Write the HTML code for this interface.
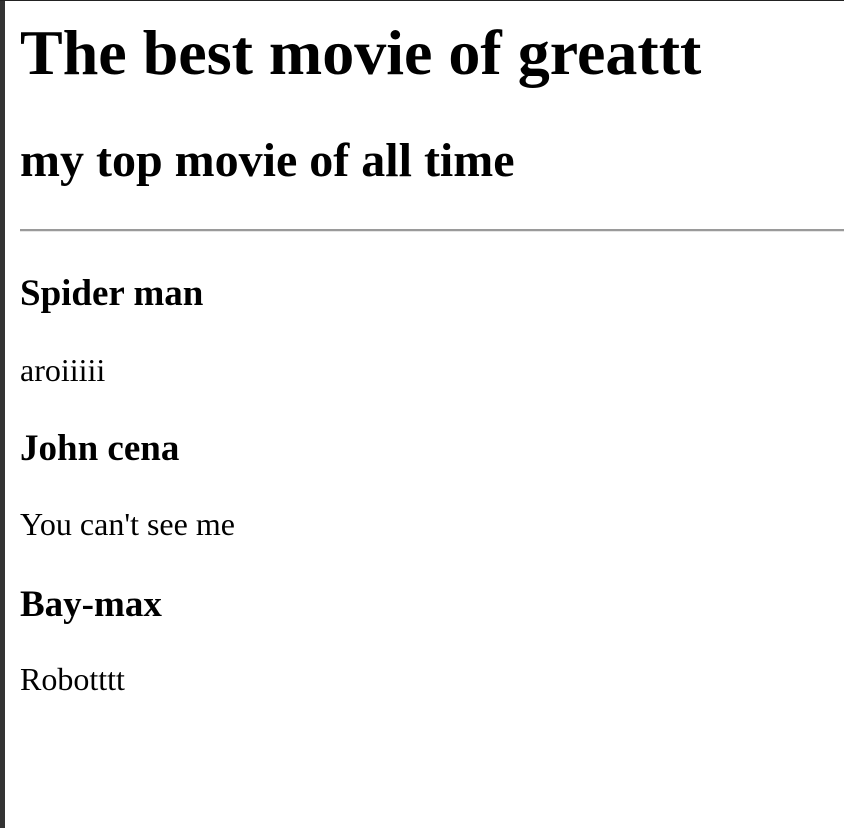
<!DOCTYPE html>
<html><head><style>
html,body{margin:0;padding:0;width:844px;height:828px;overflow:hidden;background:#fff;position:relative;font-family:"Liberation Serif",serif;color:#000}
.l{position:absolute;left:0;top:0;width:5px;height:828px;background:#333}
.t{position:absolute;left:0;top:0;width:844px;height:1px;background:#222}
.x{position:absolute;left:20px;margin:0;line-height:1;white-space:nowrap;font-weight:bold}
.p{font-weight:normal;font-size:32px}
.h3{font-size:37px}
hr{position:absolute;left:20px;top:229px;width:824px;margin:0;border:0;height:2px;background:#9a9a9a;box-shadow:0 1px 0 #e6e6e6}
</style></head><body>
<div class="l"></div><div class="t"></div>
<div class="x" style="top:21px;font-size:64px">The best movie of greattt</div>
<div class="x" style="top:137px;font-size:48px">my top movie of all time</div>
<hr>
<div class="x h3" style="top:275px">Spider man</div>
<div class="x p" style="top:354px">aroiiiii</div>
<div class="x h3" style="top:430px">John cena</div>
<div class="x p" style="top:508px">You can't see me</div>
<div class="x h3" style="top:586px">Bay-max</div>
<div class="x p" style="top:663px">Robotttt</div>
</body></html>
